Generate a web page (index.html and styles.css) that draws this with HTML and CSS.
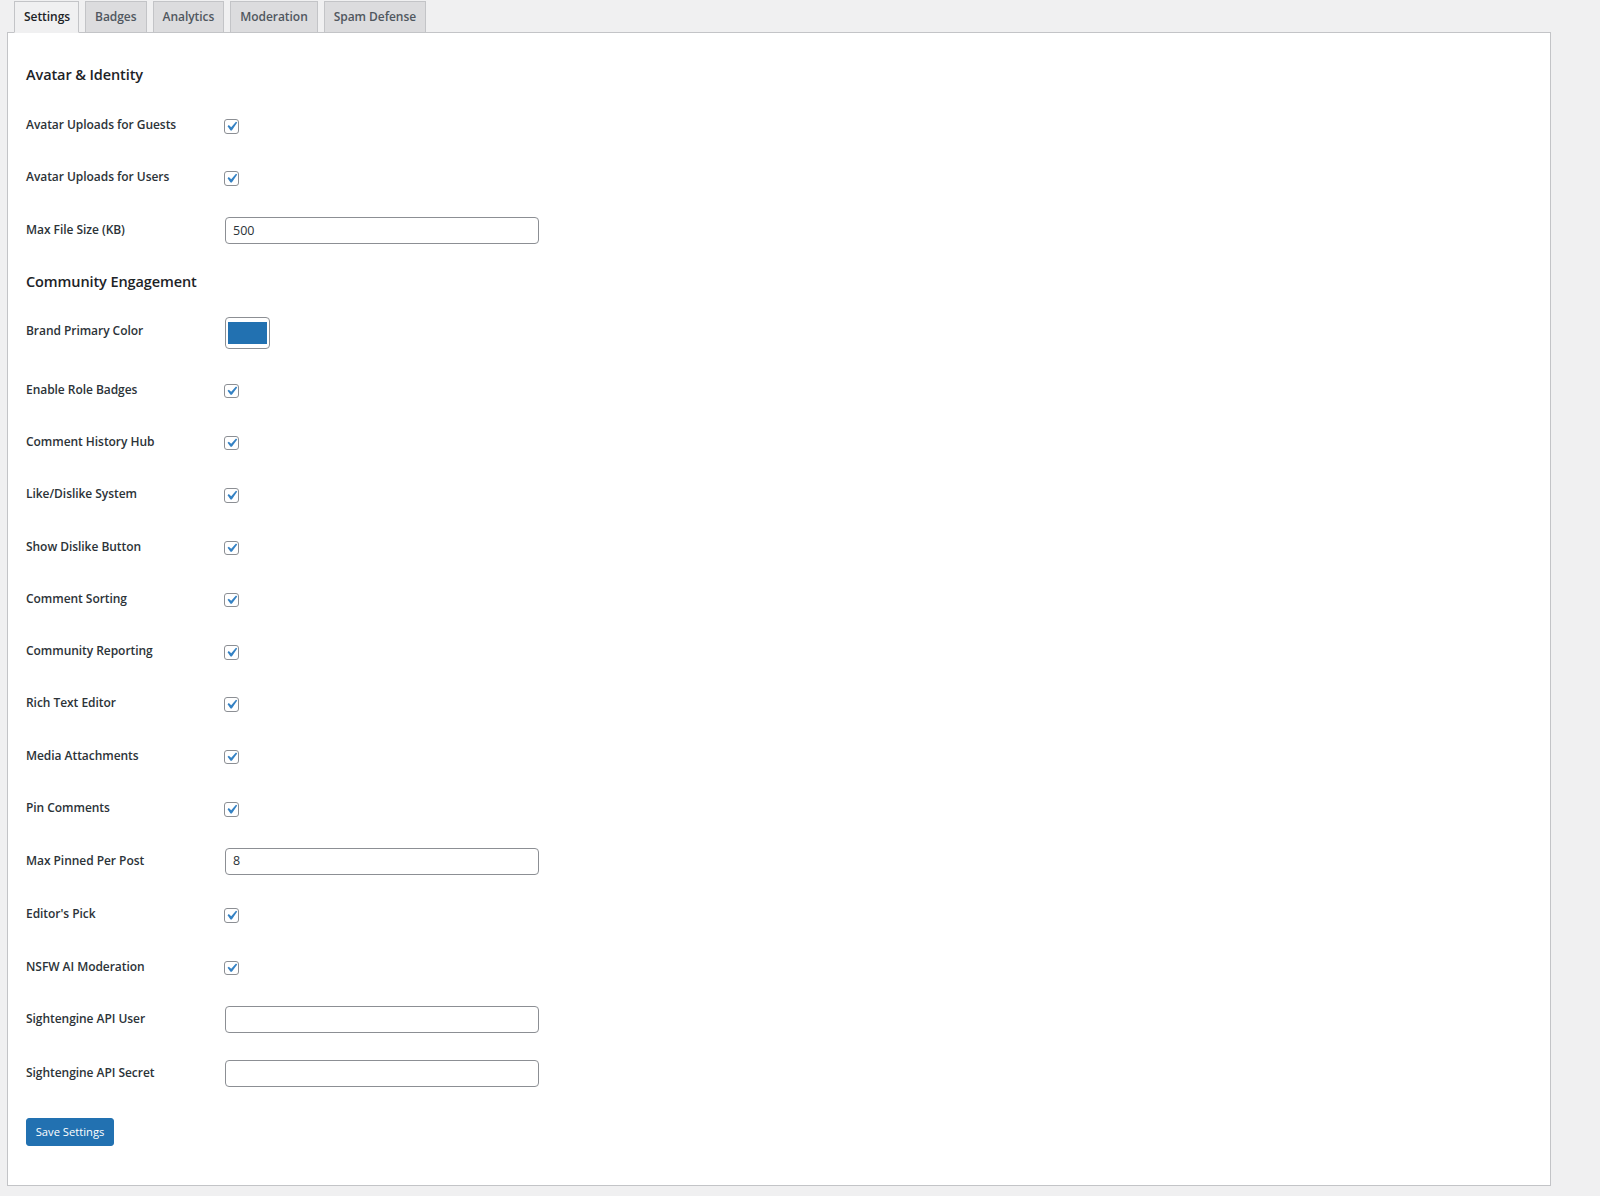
FILE: index.html
```html
<!DOCTYPE html>
<html lang="en">
<head>
<meta charset="utf-8">
<title>Settings</title>
<link rel="stylesheet" href="styles.css">
</head>
<body>
<nav class="tabs">
  <a class="tab tab-active" href="#">Settings</a>
  <a class="tab" href="#">Badges</a>
  <a class="tab" href="#">Analytics</a>
  <a class="tab" href="#">Moderation</a>
  <a class="tab" href="#">Spam Defense</a>
</nav>
<form class="panel">
  <h2 class="section-title">Avatar &amp; Identity</h2>
  <div class="row row-check"><label>Avatar Uploads for Guests</label><input class="check" type="checkbox" checked></div>
  <div class="row row-check"><label>Avatar Uploads for Users</label><input class="check" type="checkbox" checked></div>
  <div class="row row-input"><label>Max File Size (KB)</label><input class="text" type="number" value="500"></div>

  <h2 class="section-title">Community Engagement</h2>
  <div class="row row-color"><label>Brand Primary Color</label><input class="color" type="color" value="#2271b1"></div>
  <div class="row row-check"><label>Enable Role Badges</label><input class="check" type="checkbox" checked></div>
  <div class="row row-check"><label>Comment History Hub</label><input class="check" type="checkbox" checked></div>
  <div class="row row-check"><label>Like/Dislike System</label><input class="check" type="checkbox" checked></div>
  <div class="row row-check"><label>Show Dislike Button</label><input class="check" type="checkbox" checked></div>
  <div class="row row-check"><label>Comment Sorting</label><input class="check" type="checkbox" checked></div>
  <div class="row row-check"><label>Community Reporting</label><input class="check" type="checkbox" checked></div>
  <div class="row row-check"><label>Rich Text Editor</label><input class="check" type="checkbox" checked></div>
  <div class="row row-check"><label>Media Attachments</label><input class="check" type="checkbox" checked></div>
  <div class="row row-check"><label>Pin Comments</label><input class="check" type="checkbox" checked></div>
  <div class="row row-input"><label>Max Pinned Per Post</label><input class="text" type="number" value="8"></div>
  <div class="row row-check"><label>Editor's Pick</label><input class="check" type="checkbox" checked></div>
  <div class="row row-check"><label>NSFW AI Moderation</label><input class="check" type="checkbox" checked></div>
  <div class="row row-input"><label>Sightengine API User</label><input class="text" type="text"></div>
  <div class="row row-input"><label>Sightengine API Secret</label><input class="text" type="text"></div>

  <button class="save" type="button">Save Settings</button>
</form>
</body>
</html>
```

FILE: styles.css
```css
* { box-sizing: border-box; }

html, body { margin: 0; }

body {
  background: #f0f0f1;
  color: #1d2327;
  font-family: "Open Sans", "Noto Sans", sans-serif;
  font-size: 13px;
  height: 1196px;
  overflow: hidden;
}

.tabs {
  display: flex;
  gap: 6px;
  height: 33px;
  padding: 1px 0 0 14px;
  position: relative;
  z-index: 1;
}

.tab {
  display: block;
  height: 32px;
  padding: 0 9px;
  line-height: 30px;
  background: #dcdcde;
  border: 1px solid #c3c4c7;
  color: #50575e;
  font-size: 12px;
  letter-spacing: -0.05px;
  font-weight: 600;
  text-decoration: none;
}

.tab-active {
  padding-right: 8px;
  background: #f0f0f1;
  border-bottom-color: #f0f0f1;
  color: #1d2327;
}

.panel {
  width: 1544px;
  height: 1154px;
  margin: -1px 0 0 7px;
  padding: 18.7px 18px 0;
  background: #fff;
  border: 1px solid #c3c4c7;
}

.section-title {
  margin: 12.5px 0 13.3px;
  font-size: 14.5px;
  letter-spacing: -0.1px;
  line-height: 22px;
  font-weight: 600;
  color: #1d2327;
}

.row {
  display: flex;
  align-items: flex-start;
}

.row label {
  flex: 0 0 199px;
  line-height: 18px;
  font-size: 12px;
  letter-spacing: -0.05px;
  font-weight: 600;
  color: #2c3338;
}

.row-check { height: 52.3px; padding-top: 16.6px; }
.row-input { height: 54px; padding-top: 17px; }
.row-color { height: 58.2px; padding-top: 16px; }

.check {
  appearance: none;
  width: 14.5px;
  height: 14.5px;
  margin: 3px 0 0 -1px;
  background: #fff url("data:image/svg+xml,%3Csvg xmlns='http://www.w3.org/2000/svg' viewBox='0 0 20 20'%3E%3Cpath fill='%233582c4' d='M14.83 4.89l1.34.94-5.81 8.38H9.02L5.78 9.67l1.34-1.25 2.57 2.4z'/%3E%3C/svg%3E") center / 18px 18px no-repeat;
  border: 1px solid #8c8f94;
  border-radius: 3px;
}

.text {
  appearance: textfield;
  width: 314px;
  height: 27px;
  margin: -4px 0 0;
  padding: 0 7px 1px;
  background: #fff;
  border: 1px solid #8c8f94;
  border-radius: 4px;
  color: #2c3338;
  font-family: inherit;
  font-size: 12.5px;
}

.color {
  appearance: none;
  width: 45px;
  height: 32px;
  margin: -4.7px 0 0;
  padding: 4px 2px;
  background: #fff;
  border: 1px solid #8c8f94;
  border-radius: 4px;
}

.color::-webkit-color-swatch-wrapper { padding: 0; }
.color::-webkit-color-swatch { border: 0; border-radius: 0; }

.save {
  display: block;
  width: 88px;
  height: 28px;
  margin: 16.3px 0 0;
  padding: 0;
  background: #2271b1;
  border: 1px solid #2271b1;
  border-radius: 3px;
  color: #fff;
  font-family: inherit;
  font-size: 11.2px;
}
```
